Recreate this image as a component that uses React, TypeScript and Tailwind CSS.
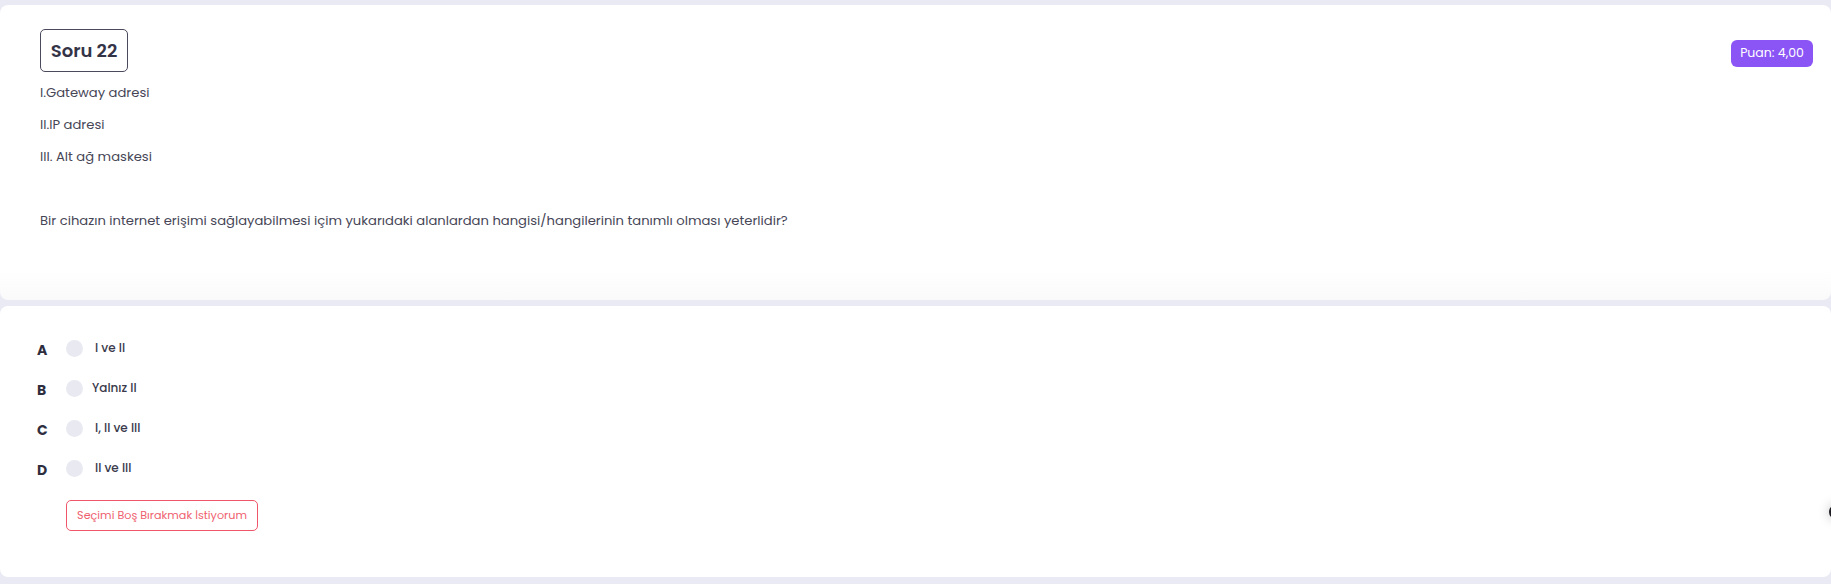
const options = [
  { key: "A", text: "I ve II", pad: "pl-[12px]" },
  { key: "B", text: "Yalnız II", pad: "pl-[9px]" },
  { key: "C", text: "I, II ve III", pad: "pl-[12px]" },
  { key: "D", text: "II ve III", pad: "pl-[12px]" },
];

const App = () => {
  return (
    <div
      className="min-h-[584px] w-full overflow-hidden bg-[#e9eaf3] pt-[5px] pb-[7px] flex flex-col gap-[6px] text-[#464657]"
      style={{ fontFamily: "Poppins, Inter, 'Noto Sans', sans-serif" }}
    >
      <section className="h-[295px] bg-white rounded-lg px-[40px] pt-[24px] flex items-start justify-between bg-gradient-to-b from-white from-90% to-[#fafafb]">
        <div className="flex flex-col">
          <div className="w-[88px] h-[43px] border border-[#4a4a5c] rounded-[5px] flex items-center justify-center text-[18px] font-semibold text-[#343447]">
            Soru 22
          </div>
          <div className="mt-[5px] text-[13.15px] leading-[32px]">
            <p>I.Gateway adresi</p>
            <p>II.IP adresi</p>
            <p>III. Alt ağ maskesi</p>
            <p>&nbsp;</p>
            <p>Bir cihazın internet erişimi sağlayabilmesi içim yukarıdaki alanlardan hangisi/hangilerinin tanımlı olması yeterlidir?</p>
          </div>
        </div>
        <div className="mt-[11px] -mr-[22px] h-[27px] w-[82px] rounded-[6px] bg-[#8b55f6] text-white text-[12.5px] flex items-center justify-center">
          Puan: 4,00
        </div>
      </section>

      <section className="relative h-[271px] bg-white rounded-lg pl-[37px] pt-[22px]">
        <div className="flex flex-col">
          {options.map((o) => (
            <div key={o.key} className="h-[40px] flex items-center">
              <span className="w-[29px] mt-[5px] text-[14px] font-bold text-[#2e2e3e]">{o.key}</span>
              <span className="w-[17px] h-[17px] rounded-full bg-[#e9eaf1]" />
              <span className={`${o.pad} text-[12px] font-medium text-[#3a3a4c]`}>{o.text}</span>
            </div>
          ))}
        </div>
        <button className="ml-[29px] mt-[12px] w-[192px] h-[31px] border border-[#f0566a] rounded-[5px] text-[11.2px] text-[#ef5f70] bg-white">
          Seçimi Boş Bırakmak İstiyorum
        </button>
        <div className="absolute -right-[22px] top-[199px] w-[24px] h-[14px] rounded-full bg-[#1e1e24] shadow-[0_0_12px_rgba(0,0,0,0.25)]" />
      </section>
    </div>
  );
};

export default App;
